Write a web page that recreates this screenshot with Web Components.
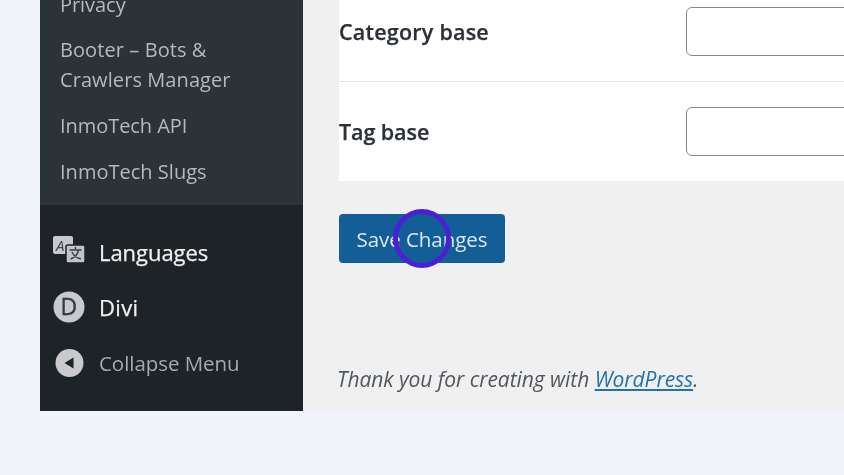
<!doctype html>
<html><head><meta charset="utf-8"><style>
html,body{margin:0;height:100%;overflow:hidden}
body{background:#f0f3f7;font-family:"Open Sans","Noto Sans",sans-serif}
</style></head><body>
<wp-frame>
  <wp-sidebar slot="side">
    <wp-sub>Privacy</wp-sub>
    <wp-sub style="--pt:15px;--ls:.08px">Booter – Bots &amp;<br>Crawlers Manager</wp-sub>
    <wp-sub>InmoTech API</wp-sub>
    <wp-sub style="--ls:.02px">InmoTech Slugs</wp-sub>
  </wp-sidebar>
  <wp-main slot="main">
    <wp-card>
      <wp-row label="Category base" first style="--ls:.22px"></wp-row>
      <wp-row label="Tag base" style="--ls:-.08px"></wp-row>
    </wp-card>
    <wp-save>Save Changes</wp-save>
    <wp-foot></wp-foot>
  </wp-main>
</wp-frame>
<script>
const def=(n,html)=>customElements.define(n,class extends HTMLElement{
  constructor(){super();this.attachShadow({mode:'open'}).innerHTML=typeof html==='function'?html(this):html;}
});
def('wp-frame',`<style>
:host{display:grid;grid-template-columns:263px 1fr;margin-left:40px;height:411px;overflow:hidden;filter:blur(.4px)}
</style><slot name="side"></slot><slot name="main"></slot>`);
def('wp-sidebar',`<style>
:host{display:flex;flex-direction:column;background:#1d2327;height:411px;overflow:hidden}
.sub{background:#2c3338;height:205px;overflow:hidden;display:flex;flex-direction:column;justify-content:flex-end}
.inner{display:flex;flex-direction:column;padding:0 0 18px 20px}
nav{display:flex;flex-direction:column;padding-left:13px}
.it{display:flex;align-items:center;height:30px;font-size:22px;font-weight:500;color:#f0f0f1;letter-spacing:-.05px;-webkit-text-stroke:.25px #f0f0f1}
.it svg{width:32px;height:32px;margin-right:14px;flex:none}
.d{letter-spacing:.35px}
.c{color:#a7aaad;font-size:20.5px;-webkit-text-stroke:0;font-weight:400;letter-spacing:-.05px}
</style>
<div class="sub"><div class="inner"><slot></slot></div></div>
<nav>
<div class="it" style="margin-top:32px"><svg viewBox="0 0 32 32"><rect x="0" y="0" width="20" height="18" rx="2" fill="#c9c8d2"/><text x="3" y="15" font-family="Open Sans" font-style="italic" font-size="15" fill="#42464c" style="-webkit-text-stroke:0">A</text><rect x="13" y="9" width="19" height="18" rx="2" fill="#c3c4c7" stroke="#1d2327" stroke-width="1.5"/><path d="M22.5 11v2M16.500 14h12M25.500 14c-1 5-5 8-8 9M19 16c1.500 4 5 6 9 7" stroke="#3a3e44" stroke-width="1.400" fill="none"/></svg>Languages</div>
<div class="it d" style="margin-top:25px"><svg viewBox="0 0 32 32"><circle cx="16" cy="16" r="15.500" fill="#c6c9ce"/><text x="16" y="24" text-anchor="middle" font-family="Open Sans" font-size="23" font-weight="400" fill="#33383e" stroke="#33383e" stroke-width=".3" style="-webkit-text-stroke:0">D</text></svg>Divi</div>
<div class="it c" style="margin-top:26px"><svg viewBox="0 0 32 32"><circle cx="16.500" cy="16" r="14" fill="#c9cacd"/><path d="M20.500 10.500v11l-9-5.500z" fill="#1d2327"/></svg>Collapse Menu</div>
</nav>`);
def('wp-sub',`<style>
:host{display:block;color:#b4b9be;font-size:20px;line-height:30px;padding-top:var(--pt,16px);letter-spacing:var(--ls,-.05px)}
</style><slot></slot>`);
def('wp-main',`<style>
:host{display:flex;flex-direction:column;background:#f0f0f1;padding-left:36px;position:relative;height:411px;overflow:hidden}
.ring{position:absolute;left:90px;top:209px;width:58px;height:59px;box-sizing:border-box;border:5px solid #4a1fd6;border-radius:50%}
</style><slot></slot><div class="ring"></div>`);
def('wp-card',`<style>
:host{display:flex;flex-direction:column;background:#fff;height:181px}
</style><slot></slot>`);
def('wp-row',el=>`<style>
:host{display:flex;align-items:center;box-sizing:border-box;height:${el.hasAttribute('first')?'82px':'99px'};${el.hasAttribute('first')?'border-bottom:1.500px solid #e3e3e4;padding-bottom:18px;':''}}
b{width:347px;flex:none;font-size:21.500px;font-weight:600;color:#2c3138;letter-spacing:var(--ls,0);-webkit-text-stroke:.25px #2c3138}
.in{flex:none;width:400px;height:49px;box-sizing:border-box;border:1.800px solid #85888d;border-radius:6px;background:#fff}
</style><b>${el.getAttribute('label')}</b><div class="in"></div>`);
def('wp-save',`<style>
:host{display:flex;align-items:center;justify-content:center;align-self:flex-start;box-sizing:border-box;margin-top:33px;width:166px;height:49px;background:#135e96;border-radius:4px;color:#d9e8f4;font-size:20.500px;letter-spacing:-.05px}
</style><slot></slot>`);
def('wp-foot',`<style>
:host{display:block;margin-top:101px;margin-left:-2px;font-size:21px;font-style:italic;color:#50575e;line-height:30px;letter-spacing:-.05px;white-space:nowrap}
a{color:#2271b1;text-decoration:underline}
</style>Thank you for creating with <a href="#">WordPress</a>.`);
</script>
</body></html>
